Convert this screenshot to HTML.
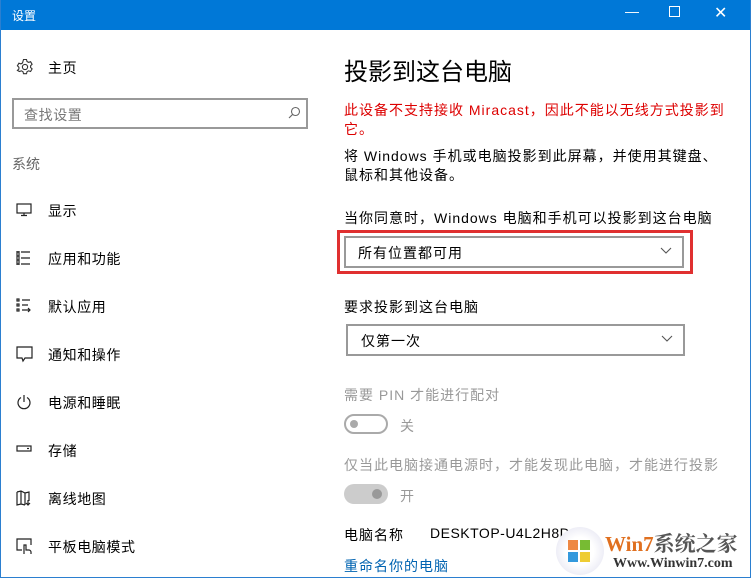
<!DOCTYPE html>
<html><head><meta charset="utf-8"><style>
*{margin:0;padding:0;box-sizing:border-box}
body{width:751px;height:578px;background:#fff;position:relative;overflow:hidden;font-family:"Liberation Sans","Noto Sans CJK SC",sans-serif;color:#000}
.a{position:absolute;white-space:nowrap}
.tb{left:0;top:0;width:751px;height:30px;background:#0078d7;color:#fff;font-size:12px;padding:7px 0 0 12px}
.bl{position:absolute;top:0;bottom:0;width:1px;background:#2b7fd0}
.nav{font-size:14px;left:48px;letter-spacing:0.6px}
.ic{position:absolute;left:16px}
.g{color:#999}
.r{letter-spacing:1px}
.dd{position:absolute;border:2px solid #999;background:#fff;font-size:14px;padding:5px 0 0 12px;letter-spacing:1px}
.chev{position:absolute;right:10px;top:9px}
.tog{position:absolute;width:44px;height:20px;border-radius:10px}
</style></head><body>
<div class="a tb">设置</div>
<div class="a" style="right:0;top:0;width:140px;height:30px;color:#fff;font-size:14px">
<span class="a" style="left:14px;top:3px">—</span>
<span class="a" style="left:58px;top:6px;width:11px;height:11px;border:1px solid #fff"></span>
<span class="a" style="left:103px;top:3px;font-size:16px">✕</span>
</div>
<div class="bl" style="left:0"></div><div class="bl" style="left:750px"></div>
<div class="a" style="left:0;right:0;bottom:0;height:1px;background:#2b7fd0"></div>

<svg class="ic" style="top:58px" width="18" height="18" viewBox="0 0 18 18" fill="none" stroke="#333" stroke-width="1.1"><circle cx="9" cy="9" r="2.6"/><path d="M7.5 1.5h3l.5 2 1.6.9 2-.7 1.5 2.6-1.5 1.4v1.8l1.5 1.4-1.5 2.6-2-.7-1.6.9-.5 2h-3l-.5-2-1.6-.9-2 .7L1.4 12.4l1.5-1.4V9.2L1.4 7.8 2.9 5.2l2 .7 1.6-.9z"/></svg>
<div class="a nav" style="top:58px">主页</div>
<div class="a" style="left:12px;top:98px;width:296px;height:31px;border:2px solid #999;font-size:14px;color:#777;padding:5px 0 0 10px;letter-spacing:0.6px">查找设置</div>
<svg class="a" style="left:288px;top:106px" width="13" height="13" viewBox="0 0 13 13" fill="none" stroke="#666" stroke-width="1.1"><circle cx="7.5" cy="5.5" r="4"/><path d="M4.7 8.3L1 12"/></svg>
<div class="a" style="left:12px;top:154px;font-size:14px;color:#666">系统</div>

<svg class="ic" style="top:203px" width="16" height="14" viewBox="0 0 16 14" fill="none" stroke="#222" stroke-width="1.2"><rect x="1" y="1" width="14" height="9"/><path d="M8 10v2M5 12.5h6"/></svg>
<div class="a nav" style="top:201px">显示</div>
<svg class="ic" style="top:250px" width="16" height="16" viewBox="0 0 16 16" fill="none" stroke="#222" stroke-width="1.2"><path d="M1 2h2M1 6h2M1 10h2M1 14h2M5 2h9M5 8h9M5 14h9M1 1v14M3 1v14"/></svg>
<div class="a nav" style="top:249px">应用和功能</div>
<svg class="ic" style="top:298px" width="16" height="16" viewBox="0 0 16 16" fill="none" stroke="#222" stroke-width="1.2"><rect x="1" y="1" width="2" height="2"/><rect x="1" y="6" width="2" height="2"/><rect x="1" y="11" width="2" height="2"/><path d="M6 2h8M6 7h6M6 12h8M12 10l2 2-2 2"/></svg>
<div class="a nav" style="top:297px">默认应用</div>
<svg class="ic" style="top:346px" width="17" height="17" viewBox="0 0 17 17" fill="none" stroke="#222" stroke-width="1.2"><path d="M1 1h15v11H9l-2 3-1-3H1z"/></svg>
<div class="a nav" style="top:345px">通知和操作</div>
<svg class="ic" style="top:394px" width="16" height="16" viewBox="0 0 16 16" fill="none" stroke="#222" stroke-width="1.2"><path d="M5 3.5A6 6 0 1 0 11 3.5M8 1v7"/></svg>
<div class="a nav" style="top:393px">电源和睡眠</div>
<svg class="ic" style="top:445px" width="16" height="8" viewBox="0 0 16 8" fill="none" stroke="#222" stroke-width="1.2"><rect x="1" y="1" width="14" height="5"/><path d="M11 3.5h2"/></svg>
<div class="a nav" style="top:441px">存储</div>
<svg class="ic" style="top:490px" width="17" height="17" viewBox="0 0 17 17" fill="none" stroke="#222" stroke-width="1.2"><path d="M1 2l4-1 4 2 4-1v9M1 2v13l4-1 4 1M5 1v13M9 3v12M12 10v5M10 13l2 2 2-2"/></svg>
<div class="a nav" style="top:489px">离线地图</div>
<svg class="ic" style="top:538px" width="17" height="17" viewBox="0 0 17 17" fill="none" stroke="#222" stroke-width="1.2"><path d="M6 12H1V1h14v6M8 16v-9h2v5h3c1 0 2 1 2 2v2"/></svg>
<div class="a nav" style="top:537px">平板电脑模式</div>

<div class="a" style="left:344px;top:52px;font-size:24px">投影到这台电脑</div>
<div class="a r" style="left:344px;top:101px;font-size:14px;color:#d00;line-height:19px">此设备不支持接收 Miracast，因此不能以无线方式投影到<br>它。</div>
<div class="a r" style="left:344px;top:147px;font-size:14px;line-height:19px">将 Windows 手机或电脑投影到此屏幕，并使用其键盘、<br>鼠标和其他设备。</div>
<div class="a r" style="left:344px;top:208px;font-size:14px">当你同意时，Windows 电脑和手机可以投影到这台电脑</div>
<div class="a" style="left:337px;top:230px;width:356px;height:44px;border:3px solid #e03030"></div>
<div class="dd" style="left:344px;top:236px;width:340px;height:32px">所有位置都可用<svg class="chev" width="12" height="8" viewBox="0 0 12 8" fill="none" stroke="#555" stroke-width="1.1"><path d="M1 1l5 5 5-5"/></svg></div>
<div class="a r" style="left:344px;top:297px;font-size:14px">要求投影到这台电脑</div>
<div class="dd" style="left:346px;top:324px;width:339px;height:32px;padding-left:13px">仅第一次<svg class="chev" width="12" height="8" viewBox="0 0 12 8" fill="none" stroke="#555" stroke-width="1.1"><path d="M1 1l5 5 5-5"/></svg></div>
<div class="a g r" style="left:344px;top:385px;font-size:14px">需要 PIN 才能进行配对</div>
<div class="tog" style="left:344px;top:414px;border:2px solid #aaa"><span class="a" style="left:4px;top:4px;width:8px;height:8px;border-radius:50%;background:#aaa"></span></div>
<div class="a g" style="left:400px;top:416px;font-size:14px">关</div>
<div class="a g r" style="left:344px;top:455px;font-size:14px">仅当此电脑接通电源时，才能发现此电脑，才能进行投影</div>
<div class="tog" style="left:344px;top:484px;background:#ccc"><span class="a" style="left:28px;top:5px;width:10px;height:10px;border-radius:50%;background:#999"></span></div>
<div class="a g" style="left:400px;top:486px;font-size:14px">开</div>
<div class="a r" style="left:344px;top:525px;font-size:14px">电脑名称</div>
<div class="a" style="left:430px;top:525px;font-size:14px;letter-spacing:0.5px">DESKTOP-U4L2H8D</div>
<div class="a r" style="left:344px;top:556px;font-size:14px;color:#0063b1">重命名你的电脑</div>

<div class="a" style="left:556px;top:527px;width:48px;height:48px;border-radius:50%;background:radial-gradient(circle,#fff 40%,#dde 100%)"></div>
<div class="a" style="left:568px;top:540px;width:10px;height:10px;background:#e84"></div>
<div class="a" style="left:580px;top:540px;width:10px;height:10px;background:#7b3"></div>
<div class="a" style="left:568px;top:552px;width:10px;height:10px;background:#39d"></div>
<div class="a" style="left:580px;top:552px;width:10px;height:10px;background:#ec3"></div>
<div class="a" style="left:605px;top:528px;font-size:21px;font-weight:bold;color:#e07020;font-family:'Liberation Serif','Noto Serif CJK SC',serif">Win7<span style="color:#555">系统之家</span></div>
<div class="a" style="left:613px;top:556px;font-size:14px;font-weight:bold;color:#333;font-family:'Liberation Serif',serif">Www.Winwin7.com</div>
</body></html>
